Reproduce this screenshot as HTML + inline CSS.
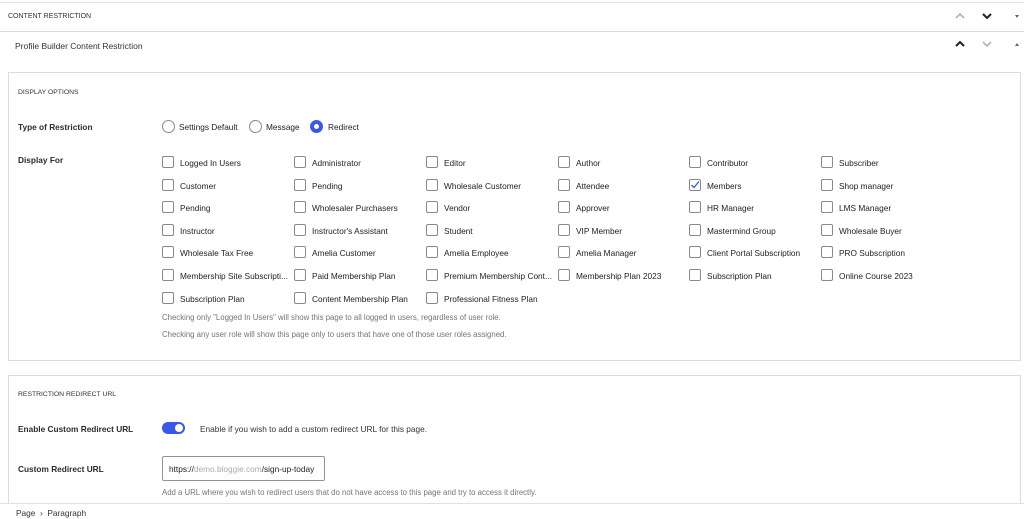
<!DOCTYPE html>
<html><head><style>
*{box-sizing:border-box;margin:0;padding:0}
body{width:1024px;height:519px;overflow:hidden;background:#fff;font-family:"Liberation Sans",sans-serif;color:#1e1e1e;position:relative;font-size:8.3px}
.a{position:absolute;white-space:nowrap}
.cb{position:absolute;width:12px;height:12px;border:1px solid #8a8a8a;border-radius:2px;background:#fff}
.rd{position:absolute;width:13px;height:13px;border:1px solid #8a8a8a;border-radius:50%}
.lbl{font-weight:bold;color:#2c2c2c}
.gr{color:#757575}
</style></head><body>
<div class="a" style="left:0;top:2px;width:1024px;height:1px;background:#e2e2e2"></div>
<div class="a" style="left:8px;top:13px;font-size:7px;color:#333">CONTENT RESTRICTION</div>
<div class="a" style="left:0;top:31px;width:1024px;height:1px;background:#dcdcdc"></div>
<div class="a" style="left:15px;top:41px;font-size:8.5px;color:#333">Profile Builder Content Restriction</div>
<svg class="a" style="left:954px;top:12px" width="70" height="40" fill="none" stroke-width="1.5">
<path d="M2 6l4-4 4 4" stroke="#aaa"/><path d="M29 2l4 4 4-4" stroke="#222" stroke-width="2"/><path d="M61 3l2 3 2-3z" fill="#666" stroke="none"/>
<path d="M2 34l4-4 4 4" stroke="#222" stroke-width="2"/><path d="M29 30l4 4 4-4" stroke="#aaa"/><path d="M61 34l2-3 2 3z" fill="#666" stroke="none"/>
</svg>
<div class="a" style="left:8px;top:72px;width:1013px;height:289px;border:1px solid #dcdcdc"></div>
<div class="a" style="left:18px;top:89px;font-size:6.8px;color:#333">DISPLAY OPTIONS</div>
<div class="a lbl" style="left:18px;top:122px">Type of Restriction</div>
<div class="rd" style="left:162px;top:120px"></div><div class="a" style="left:179px;top:122px">Settings Default</div>
<div class="rd" style="left:249px;top:120px"></div><div class="a" style="left:266px;top:122px">Message</div>
<div class="rd" style="left:310px;top:120px;border:4px solid #3858e9"></div><div class="a" style="left:328px;top:122px">Redirect</div>
<div class="a lbl" style="left:18px;top:155px">Display For</div>
<div id="g"></div>
<div class="a gr" style="left:162px;top:313px;font-size:7.8px">Checking only "Logged In Users" will show this page to all logged in users, regardless of user role.</div>
<div class="a gr" style="left:162px;top:330px;font-size:7.8px">Checking any user role will show this page only to users that have one of those user roles assigned.</div>
<div class="a" style="left:8px;top:375px;width:1013px;height:140px;border:1px solid #dcdcdc"></div>
<div class="a" style="left:18px;top:391px;font-size:6.8px;color:#333">RESTRICTION REDIRECT URL</div>
<div class="a lbl" style="left:18px;top:424px">Enable Custom Redirect URL</div>
<div class="a" style="left:162px;top:422px;width:23px;height:12px;border-radius:6px;background:#3858e9"></div>
<div class="a" style="left:175px;top:424px;width:8px;height:8px;border-radius:50%;background:#fff"></div>
<div class="a" style="left:200px;top:424px;color:#333">Enable if you wish to add a custom redirect URL for this page.</div>
<div class="a lbl" style="left:18px;top:464px">Custom Redirect URL</div>
<div class="a" style="left:162px;top:456px;width:163px;height:25px;border:1px solid #949494;border-radius:2px;padding:7px 6px;overflow:hidden">https://<span style="color:#aaa">demo.bloggie.com</span>/sign-up-today</div>
<div class="a gr" style="left:162px;top:488px;font-size:7.8px">Add a URL where you wish to redirect users that do not have access to this page and try to access it directly.</div>
<div class="a" style="left:0;top:503px;width:1024px;height:16px;background:#fff;border-top:1px solid #e0e0e0"></div>
<div class="a" style="left:16px;top:508px;color:#333">Page &nbsp;›&nbsp; Paragraph</div>
<script>
var rows=[["Logged In Users","Administrator","Editor","Author","Contributor","Subscriber"],
["Customer","Pending","Wholesale Customer","Attendee","Members","Shop manager"],
["Pending","Wholesaler Purchasers","Vendor","Approver","HR Manager","LMS Manager"],
["Instructor","Instructor's Assistant","Student","VIP Member","Mastermind Group","Wholesale Buyer"],
["Wholesale Tax Free","Amelia Customer","Amelia Employee","Amelia Manager","Client Portal Subscription","PRO Subscription"],
["Membership Site Subscripti...","Paid Membership Plan","Premium Membership Cont...","Membership Plan 2023","Subscription Plan","Online Course 2023"],
["Subscription Plan","Content Membership Plan","Professional Fitness Plan"]];
var xs=[162,294,426,558,689,821],h="";
rows.forEach(function(r,i){var y=156+i*22.6;r.forEach(function(t,j){
var chk=(i==1&&j==4);
h+='<div class="cb" style="left:'+xs[j]+'px;top:'+y+'px">'+(chk?'<svg width="10" height="10" style="position:absolute;left:0;top:0"><path d="M1.5 5l2.5 2.5 5-6" stroke="#3858e9" stroke-width="1.3" fill="none"/></svg>':'')+'</div><div class="a" style="left:'+(xs[j]+18)+'px;top:'+(y+2)+'px">'+t+'</div>';});});
document.getElementById("g").outerHTML=h;
</script>
</body></html>
